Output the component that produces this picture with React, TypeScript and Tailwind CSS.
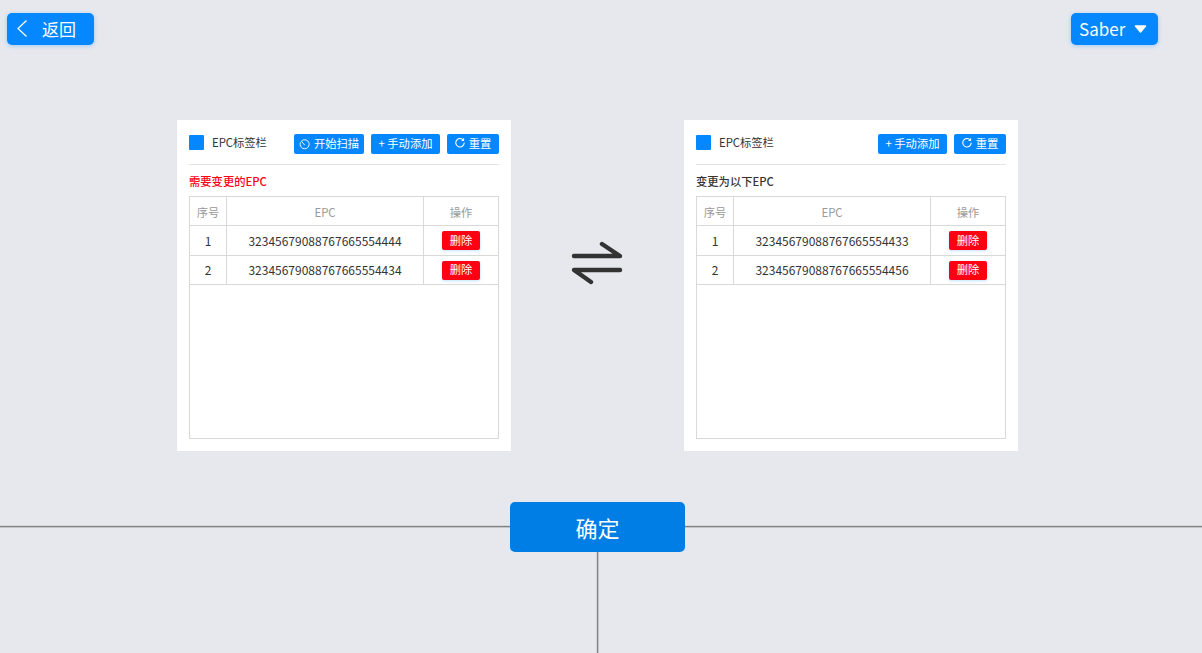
const font = { fontFamily: '"Noto Sans CJK SC", "Noto Sans", sans-serif' };

function ScanIcon() {
  return (
    <svg width="11" height="11" viewBox="0 0 12 12" fill="none" stroke="currentColor" strokeWidth="1" strokeLinecap="round">
      <path d="M3.2 1.6A5 5 0 1 1 1.4 4" />
      <path d="M2.6 2.4 6 6.4" />
    </svg>
  );
}

function ResetIcon() {
  return (
    <svg className="mb-[2px]" width="10" height="10" viewBox="0 0 10 10" fill="none" stroke="currentColor" strokeWidth="1.1" strokeLinecap="round" strokeLinejoin="round">
      <path d="M8.2 2A4.2 4.2 0 1 0 9.2 5" />
      <path d="M8.6 0.8V2.4H7" />
    </svg>
  );
}

function SwapIcon() {
  return (
    <svg width="52" height="44" viewBox="0 0 52 44" fill="none" stroke="#333333" strokeWidth="4.4" strokeLinecap="round" strokeLinejoin="round">
      <path d="M3 15H49L31 3" />
      <path d="M49 29H3L20 41" />
    </svg>
  );
}

function SmallButton({ children, className }: { children: React.ReactNode; className: string }) {
  return (
    <button className={`flex h-5 items-center justify-center gap-1 rounded-[2px] bg-[#0587ff] text-[11.3px] leading-none text-white ${className}`}>
      {children}
    </button>
  );
}

function EpcRow({ index, epc, height }: { index: number; epc: string; height: string }) {
  return (
    <div className={`grid grid-cols-[37px_197px_1fr] border-b border-[#d9d9d9] text-[12px] text-[#333] ${height}`}>
      <div className="flex items-center justify-center border-r border-[#d9d9d9]">{index}</div>
      <div className="flex items-center justify-center border-r border-[#d9d9d9]">{epc}</div>
      <div className="flex items-center justify-center">
        <button className="flex h-[19px] w-[38px] items-center justify-center rounded-[2px] bg-[#ff0013] text-[11.3px] leading-none text-white shadow-[0_1px_3px_rgba(5,135,255,0.25)]">
          删除
        </button>
      </div>
    </div>
  );
}

function EpcCard({ title, titleColor, scan, rows }: { title: string; titleColor: string; scan?: boolean; rows: string[] }) {
  return (
    <div className="h-[331px] w-[334px] bg-white px-3">
      <div className="flex h-[45px] items-start justify-between border-b border-[#e3e3e3] pt-[14px]">
        <div className="mt-px flex items-center">
          <div className="h-[15px] w-[15px] rounded-[1px] bg-[#0587ff]" />
          <span className="ml-2 text-[11.3px] leading-[15px] text-[#333]">EPC标签栏</span>
        </div>
        <div className="flex gap-[7px]">
          {scan && (
            <SmallButton className="w-[70px]">
              <ScanIcon />
              开始扫描
            </SmallButton>
          )}
          <SmallButton className="w-[69px]">+ 手动添加</SmallButton>
          <SmallButton className="w-[52px]">
            <ResetIcon />
            重置
          </SmallButton>
        </div>
      </div>
      <div className={`flex h-[31px] items-center pt-px text-[11.3px] font-medium ${titleColor}`}>{title}</div>
      <div className="h-[243px] border border-[#d9d9d9]">
        <div className="grid h-[29px] grid-cols-[37px_197px_1fr] border-b border-[#d9d9d9] text-[11.3px] text-[#999]">
          <div className="flex items-center justify-center border-r border-[#d9d9d9] pt-[2px]">序号</div>
          <div className="flex items-center justify-center border-r border-[#d9d9d9] pt-[2px]">EPC</div>
          <div className="flex items-center justify-center pt-[2px]">操作</div>
        </div>
        {rows.map((epc, i) => (
          <EpcRow key={epc} index={i + 1} epc={epc} height={i === 0 ? 'h-[30px]' : 'h-[29px]'} />
        ))}
      </div>
    </div>
  );
}

export default function App() {
  return (
    <div className="relative h-[653px] w-full overflow-hidden bg-[#e6e8ee]" style={font}>
      {/* lines behind the confirm button */}
      <div className="absolute left-0 right-0 top-[526px] h-px bg-[#828282] shadow-[0_1px_0_#c4c5c9,0_-1px_0_#d6d7db]" />
      <div className="absolute left-[597px] top-[527px] h-[126px] w-px bg-[#828282] shadow-[1px_0_0_#c4c5c9,-1px_0_0_#d6d7db]" />

      <div className="relative flex justify-between pl-[7px] pr-[44px] pt-[13px]">
        <button className="flex h-8 w-[87px] items-center rounded-[5px] bg-[#0587ff] pl-[10px] text-[17px] text-white shadow-[0_1px_4px_rgba(5,135,255,0.3)]">
          <svg width="10" height="18" viewBox="0 0 10 18" fill="none" stroke="white" strokeWidth="1.2">
            <path d="M9.5 0.5 1 8.5 9.5 16.5" />
          </svg>
          <span className="ml-[15px]">返回</span>
        </button>
        <button className="flex h-8 w-[87px] items-center rounded-[5px] bg-[#0587ff] pl-2 text-[17px] text-white shadow-[0_1px_4px_rgba(5,135,255,0.3)]">
          Saber
          <svg className="ml-[9px]" width="13" height="8" viewBox="0 0 13 8" fill="white">
            <path d="M1.5 1H11.5L6.5 7Z" stroke="white" strokeWidth="1.5" strokeLinejoin="round" />
          </svg>
        </button>
      </div>

      <div className="relative mt-[75px] flex items-center pl-[177px]">
        <EpcCard
          title="需要变更的EPC"
          titleColor="text-[#ff0013]"
          scan
          rows={['32345679088767665554444', '32345679088767665554434']}
        />
        <div className="flex w-[173px] justify-center pb-[46px] pr-[2px]">
          <SwapIcon />
        </div>
        <EpcCard
          title="变更为以下EPC"
          titleColor="text-[#333]"
          rows={['32345679088767665554433', '32345679088767665554456']}
        />
      </div>

      <div className="relative mt-[51px] pl-[510px]">
        <button className="h-[50px] w-[175px] rounded-[5px] bg-[#007ee6] text-[22px] text-white">确定</button>
      </div>
    </div>
  );
}
